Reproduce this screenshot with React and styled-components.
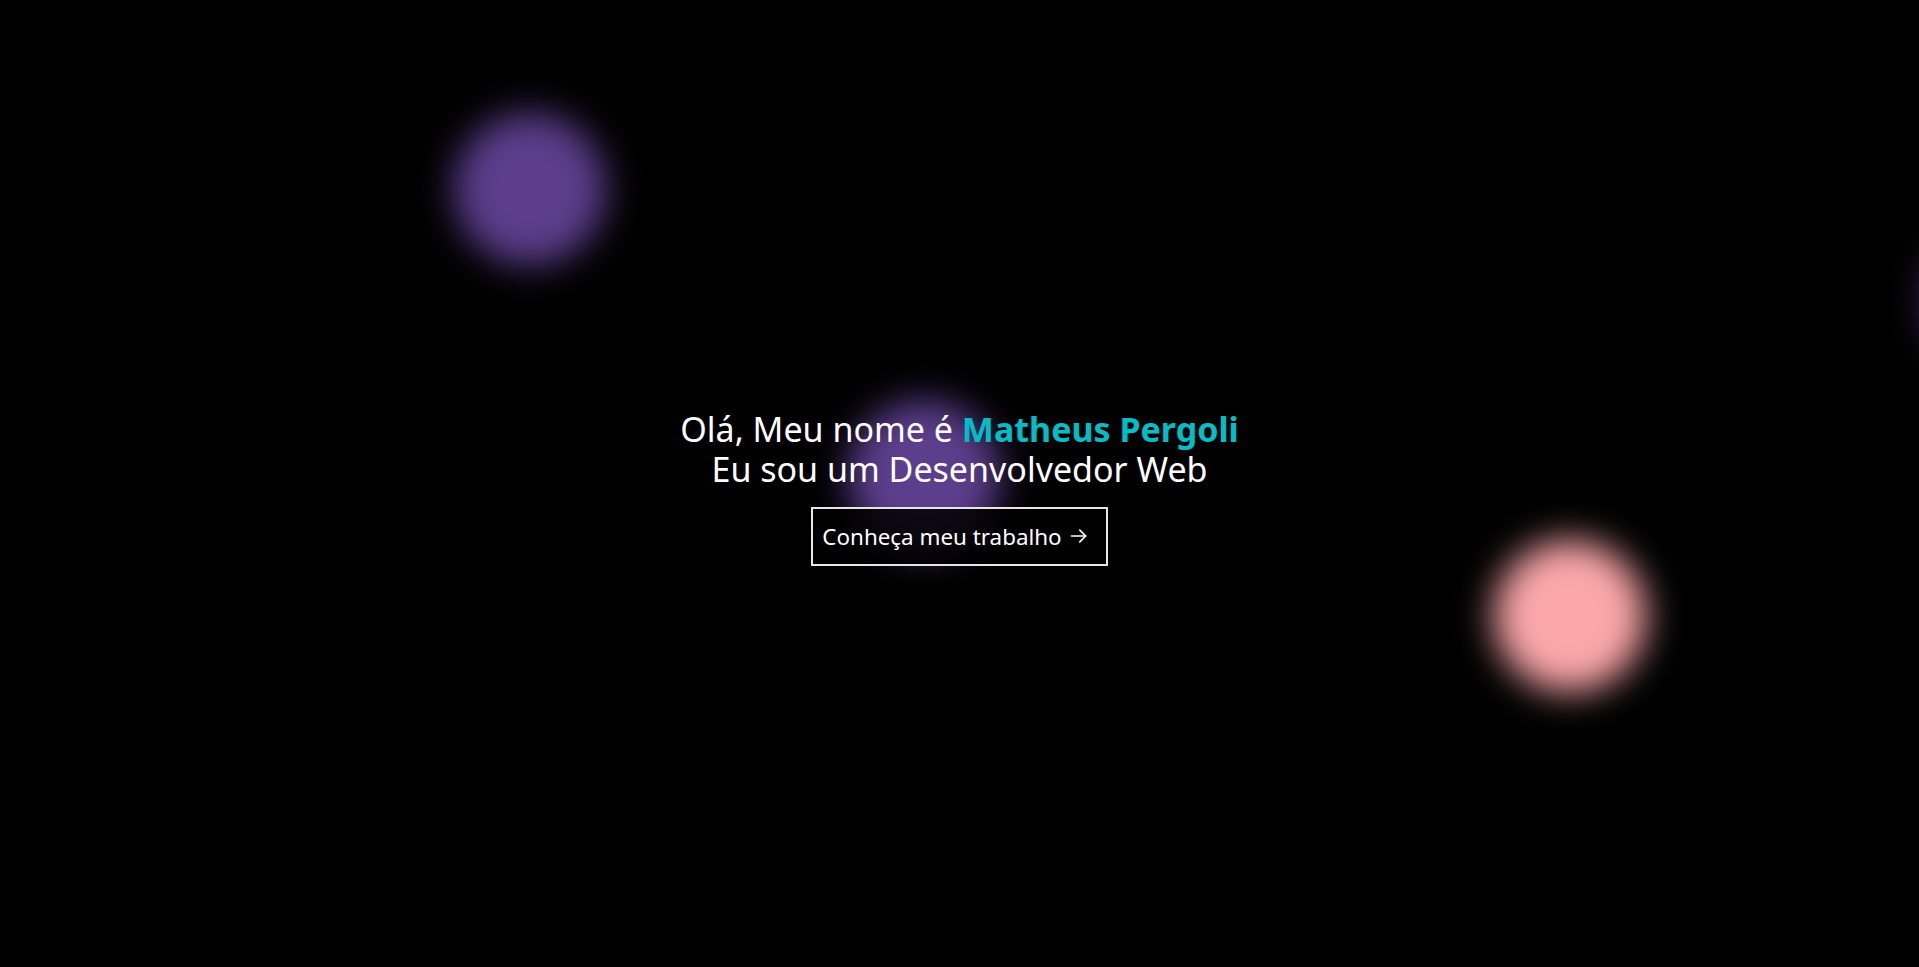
import React from 'react';
import styled, { createGlobalStyle } from 'styled-components';

const GlobalStyle = createGlobalStyle`
    html, body {
        margin: 0;
        padding: 0;
        background: #000;
        overflow: hidden;
    }
    * {
        box-sizing: border-box;
    }
`;

const HeroWrapper = styled.main`
    position: relative;
    width: 100vw;
    height: 100vh;
    padding-top: 7px;
    background: #000;
    overflow: hidden;
    display: flex;
    align-items: center;
    justify-content: center;
    font-family: "Noto Sans", "Open Sans", sans-serif;
    color: #fff;
`;

const Blob = styled.div`
    position: absolute;
    left: ${props => props.x}px;
    top: ${props => props.y}px;
    width: 152px;
    height: 152px;
    margin: -76px 0 0 -76px;
    border-radius: 50%;
    background: ${props => props.color};
    filter: blur(18px);
    z-index: 0;
`;

const Content = styled.div`
    position: relative;
    z-index: 1;
    display: flex;
    flex-direction: column;
    align-items: center;
    gap: 18px;
`;

const Title = styled.h1`
    margin: 0;
    font-size: 34px;
    font-weight: 400;
    line-height: 40px;
    text-align: center;
`;

const Name = styled.span`
    color: #00bec8;
    font-weight: 700;
`;

const Button = styled.button`
    display: flex;
    align-items: center;
    gap: 7px;
    padding: 12px 17px 12px 9px;
    background: rgba(0, 0, 0, 0.85);
    border: 2px solid #e6e6e6;
    color: #fff;
    font-family: inherit;
    font-size: 22.4px;
    line-height: 31px;
    cursor: pointer;
`;

const Arrow = () => (
    <svg width="20" height="20" viewBox="0 0 24 24" fill="none" stroke="#fff" strokeWidth="2" strokeLinecap="round" strokeLinejoin="round">
        <path d="M3 12h17" />
        <path d="M13 5l7 7-7 7" />
    </svg>
);

const blobs = [
    { x: 530, y: 189, color: '#5c3e8c' },
    { x: 924, y: 476, color: '#5c3e8c' },
    { x: 1570, y: 616, color: '#fca8ab' },
    { x: 2000, y: 300, color: '#3a2760' },
];

const App = () => (
    <>
        <GlobalStyle />
        <HeroWrapper>
            {blobs.map((b, i) => <Blob key={i} x={b.x} y={b.y} color={b.color} />)}
            <Content>
                <Title>
                    Olá, Meu nome é <Name>Matheus Pergoli</Name>
                    <br />
                    Eu sou um Desenvolvedor Web
                </Title>
                <Button>
                    Conheça meu trabalho <Arrow />
                </Button>
            </Content>
        </HeroWrapper>
    </>
);

export default App;
